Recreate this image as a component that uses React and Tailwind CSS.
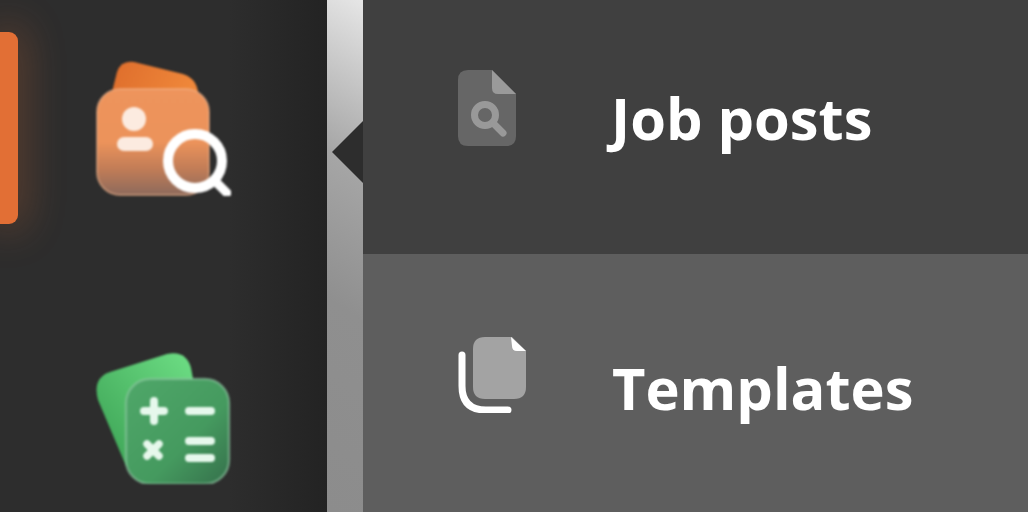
function CandidateIcon() {
  return (
    <svg viewBox="90 55 145 145" className="block h-[145px] w-[145px] blur-[0.8px]">
      <defs>
        <linearGradient id="orangeBack" x1="0" y1="0" x2="1" y2="0.2">
          <stop offset="0" stopColor="#de6d2c" />
          <stop offset="1" stopColor="#ef873a" />
        </linearGradient>
        <linearGradient id="orangeFront" x1="0" y1="0" x2="0" y2="1">
          <stop offset="0" stopColor="#ee945c" />
          <stop offset="0.5" stopColor="#ec935b" />
          <stop offset="0.75" stopColor="#c27d57" />
          <stop offset="1" stopColor="#8d6a5c" />
        </linearGradient>
        <clipPath id="candidateClip">
          <rect x="90" y="55" width="141" height="141" />
        </clipPath>
      </defs>
      <g clipPath="url(#candidateClip)">
        <path d="M112 92 L117 72 Q121 60 134 62 L183 74 Q196 78 198 92 L198 100 L112 100 Z" fill="url(#orangeBack)" />
        <rect x="97" y="89" width="112" height="106" rx="23" fill="url(#orangeFront)" stroke="#f2b48d" strokeOpacity="0.55" strokeWidth="2" />
        <circle cx="134" cy="119" r="12" fill="#fcebe0" />
        <rect x="117" y="137" width="36" height="14" rx="7" fill="#fcebe0" />
        <circle cx="195" cy="161" r="27" fill="none" stroke="#ffffff" strokeWidth="10" />
        <path d="M215 181 L230 196" stroke="#ffffff" strokeWidth="9" />
      </g>
    </svg>
  )
}

function CalculatorIcon() {
  return (
    <svg viewBox="90 345 145 145" className="block h-[145px] w-[145px] blur-[0.8px]">
      <defs>
        <linearGradient id="greenBack" x1="1" y1="0" x2="0" y2="1">
          <stop offset="0" stopColor="#6fe086" />
          <stop offset="1" stopColor="#379c50" />
        </linearGradient>
        <linearGradient id="greenFront" x1="0" y1="0" x2="1" y2="1">
          <stop offset="0" stopColor="#4fa769" />
          <stop offset="0.6" stopColor="#459a5f" />
          <stop offset="1" stopColor="#35704b" />
        </linearGradient>
        <clipPath id="calculatorClip">
          <rect x="90" y="345" width="145" height="139" />
        </clipPath>
      </defs>
      <g clipPath="url(#calculatorClip)">
        <path d="M110 372 L167 354 Q186 350 191 368 L197 400 L150 478 L126 466 L98 400 Q92 378 110 372 Z" fill="url(#greenBack)" />
        <rect x="126" y="379" width="103" height="105" rx="24" fill="url(#greenFront)" stroke="#8cc7a0" strokeOpacity="0.6" strokeWidth="2.5" />
        <g stroke="#e6f8ec" strokeWidth="8" strokeLinecap="round" fill="none">
          <path d="M144 411 H164 M154 401 V421" />
          <path d="M147 444 L159 456 M159 444 L147 456" strokeWidth="7.5" />
          <path d="M189 411 H211 M189 441 H211 M189 458 H211" />
        </g>
      </g>
    </svg>
  )
}

function FileSearchIcon() {
  return (
    <svg viewBox="458 70 58 76" className="block h-[76px] w-[58px]">
      <path d="M468 70 H492 L516 94 V136 Q516 146 506 146 H468 Q458 146 458 136 V80 Q458 70 468 70 Z" fill="#666666" />
      <path d="M492 70 L516 94 H498 Q492 94 492 88 Z" fill="#9a9a9a" />
      <circle cx="485" cy="115" r="10.5" fill="none" stroke="#999999" strokeWidth="7" />
      <path d="M494 124 L503 133" stroke="#999999" strokeWidth="7" strokeLinecap="round" />
    </svg>
  )
}

function CopyIcon() {
  return (
    <svg viewBox="458 337 68 76" className="block h-[76px] w-[68px]">
      <path d="M462 355 V386 Q462 410 486 410 H508" fill="none" stroke="#ffffff" strokeWidth="7" strokeLinecap="round" />
      <path d="M485 337 H512 L526 351 V387 Q526 399 514 399 H485 Q473 399 473 387 V349 Q473 337 485 337 Z" fill="#a3a3a3" />
      <path d="M511 337 L526 351 H517 Q512 351 512 346 Z" fill="#ffffff" />
    </svg>
  )
}

export default function App() {
  return (
    <div className="flex h-[512px] w-[1028px] overflow-hidden font-['Open_Sans',sans-serif]">
      {/* Sidebar */}
      <div className="relative flex w-[327px] shrink-0 flex-col gap-[145px] bg-gradient-to-r from-[#2d2d2d] from-70% to-[#232323] pl-[90px] pt-[55px]">
        <div className="absolute left-0 top-[32px] h-[192px] w-[18px] rounded-r-[9px] bg-[#e26f35] shadow-[0_0_40px_6px_rgba(226,111,53,0.3)]" />
        <CandidateIcon />
        <CalculatorIcon />
      </div>

      {/* Collapse handle */}
      <div className="relative w-[36px] shrink-0 bg-[linear-gradient(212deg,#e6e6e6_0%,#a6a6a6_32%,#8f8f8f_60%,#8c8c8c_100%)]">
        <svg viewBox="0 0 31 62" className="absolute left-[5px] top-[121px] h-[62px] w-[31px]">
          <path d="M0 31 L31 0 V62 Z" fill="#2d2d2d" />
        </svg>
      </div>

      {/* Menu */}
      <div className="flex flex-1 flex-col">
        <div className="flex h-[254px] items-start bg-[#404040] pl-[95px] pt-[70px]">
          <FileSearchIcon />
          <span className="ml-[95px] mt-[12px] text-[57.8px] font-bold leading-[72px] text-white">Job posts</span>
        </div>
        <div className="flex flex-1 items-start bg-[#5e5e5e] pl-[95px] pt-[83px]">
          <CopyIcon />
          <span className="ml-[86px] mt-[15px] text-[57.8px] font-bold leading-[72px] text-white">Templates</span>
        </div>
      </div>
    </div>
  )
}
